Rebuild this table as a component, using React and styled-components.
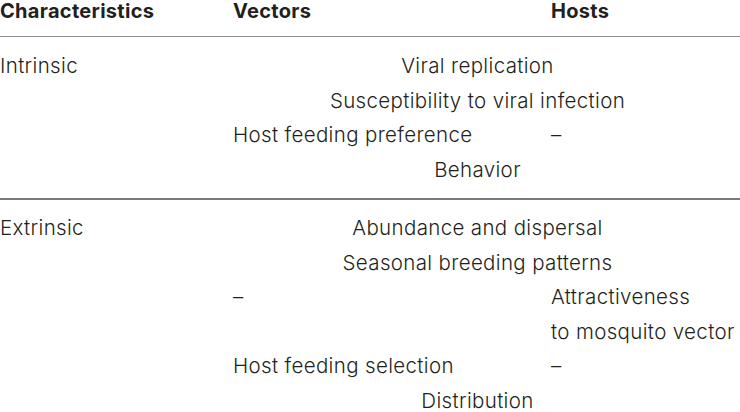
import React from "react";
import styled, { createGlobalStyle } from "styled-components";

const Global = createGlobalStyle`
  html, body { margin: 0; padding: 0; background: #ffffff; }
  body {
    font-family: "Inter", "Liberation Sans", Arial, sans-serif;
    color: #231f20;
    -webkit-font-smoothing: antialiased;
  }
`;

const COLS = "233px 318px 189px";

const Table = styled.div`
  width: 740px;
`;

const HeaderRow = styled.div`
  display: grid;
  grid-template-columns: ${COLS};
  height: 36px;
  border-bottom: 1px solid #8c8c8c;
`;

const HeaderCell = styled.div`
  font-size: 20px;
  font-weight: 700;
  letter-spacing: 0.3px;
  line-height: 23px;
  white-space: nowrap;
`;

const Section = styled.section`
  display: grid;
  grid-template-columns: ${COLS};
  grid-auto-rows: 34.5px;
  padding: ${(p) => (p.$first ? "12px 0 11px" : "11px 0 0")};
  border-bottom: ${(p) => (p.$rule ? "2px solid #7a7a7a" : "none")};
  font-size: 20.5px;
  font-weight: 300;
  letter-spacing: 0.35px;
  line-height: 34.5px;
`;

const Cell = styled.div`
  grid-row: ${(p) => p.$row} / span ${(p) => p.$span || 1};
  white-space: nowrap;
`;

const Label = styled(Cell)`
  grid-column: 1;
`;

const VectorCell = styled(Cell)`
  grid-column: 2;
`;

const HostCell = styled(Cell)`
  grid-column: 3;
`;

const SharedCell = styled(Cell)`
  grid-column: 2 / 4;
  text-align: center;
  padding-right: 18px;
`;

export default function App() {
  return (
    <>
      <Global />
      <Table>
        <HeaderRow>
          <HeaderCell>Characteristics</HeaderCell>
          <HeaderCell>Vectors</HeaderCell>
          <HeaderCell>Hosts</HeaderCell>
        </HeaderRow>

        <Section $first $rule>
          <Label $row={1}>Intrinsic</Label>
          <SharedCell $row={1}>Viral replication</SharedCell>
          <SharedCell $row={2}>Susceptibility to viral infection</SharedCell>
          <VectorCell $row={3}>Host feeding preference</VectorCell>
          <HostCell $row={3}>–</HostCell>
          <SharedCell $row={4}>Behavior</SharedCell>
        </Section>

        <Section>
          <Label $row={1}>Extrinsic</Label>
          <SharedCell $row={1}>Abundance and dispersal</SharedCell>
          <SharedCell $row={2}>Seasonal breeding patterns</SharedCell>
          <VectorCell $row={3}>–</VectorCell>
          <HostCell $row={3} $span={2}>
            Attractiveness
            <br />
            to mosquito vector
          </HostCell>
          <VectorCell $row={5}>Host feeding selection</VectorCell>
          <HostCell $row={5}>–</HostCell>
          <SharedCell $row={6}>Distribution</SharedCell>
        </Section>
      </Table>
    </>
  );
}
